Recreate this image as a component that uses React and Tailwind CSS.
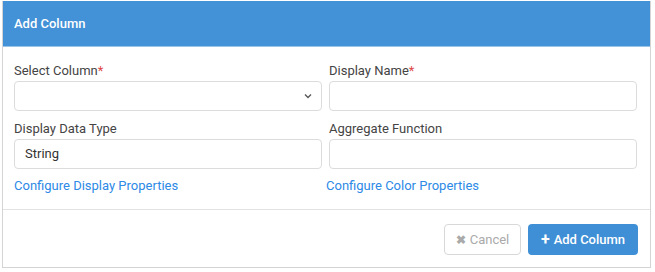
import React from "react";

const Label = ({ children, required }) => (
	<div className="h-[18px] leading-[18px] text-[13px] text-[#444] mb-[1px]">
		{children}
		{required && <span className="text-[#e04848]">*</span>}
	</div>
);

const Field = ({ children }) => (
	<div className="h-[30px] w-full rounded-[4px] border border-[#dcdcdc] bg-white flex items-center px-[10px] text-[13px] text-[#333]">
		{children}
	</div>
);

export default function App() {
	return (
		<div
			className="w-[655px] h-[272px] bg-white pl-[2px] pt-[1px]"
			style={{ fontFamily: "Roboto, 'Liberation Sans', sans-serif" }}
		>
			<div className="w-[649px] h-[267px] border-x border-b border-[#d4d4d4] flex flex-col">
				<div className="h-[46px] bg-[#4391d6] border-b border-[#9cc4e8] flex items-center pl-[11px] text-white text-[13px] font-medium">
					Add Column
				</div>
				<div className="pl-[11px] pt-[15px] grid grid-cols-[308px_308px] gap-x-[7px]">
					<div>
						<Label required>Select Column</Label>
						<Field>
							<div className="flex-1" />
							<svg width="10" height="10" viewBox="0 0 10 10" className="mr-[-2px]">
								<path d="M2 3.5 L5 6.5 L8 3.5" fill="none" stroke="#555" strokeWidth="1.3" />
							</svg>
						</Field>
					</div>
					<div>
						<Label required>Display Name</Label>
						<Field />
					</div>
					<div className="mt-[9px]">
						<Label>Display Data Type</Label>
						<Field>String</Field>
					</div>
					<div className="mt-[9px]">
						<Label>Aggregate Function</Label>
						<Field />
					</div>
					<div className="mt-[8px] h-[18px] leading-[18px] text-[13px] text-[#2d8ae6]">
						Configure Display Properties
					</div>
					<div className="mt-[8px] h-[18px] leading-[18px] text-[13px] text-[#2d8ae6] -ml-[3px]">
						Configure Color Properties
					</div>
				</div>
				<div className="mt-[14px] border-t border-[#e2e2e2] flex-1 flex justify-end items-start pt-[14px] pr-[12px] gap-[7px]">
					<div className="h-[31px] w-[77px] rounded-[4px] border border-[#d8d8d8] flex items-center justify-center gap-[4px] text-[13px] text-[#aaa]">
						<span className="text-[12px] font-bold">✖</span>
						Cancel
					</div>
					<div className="h-[31px] w-[110px] rounded-[4px] bg-[#3f8fd6] flex items-center justify-center gap-[4px] text-[13px] text-white font-medium">
						<span className="text-[16px] font-bold leading-none">+</span>
						Add Column
					</div>
				</div>
			</div>
		</div>
	);
}
